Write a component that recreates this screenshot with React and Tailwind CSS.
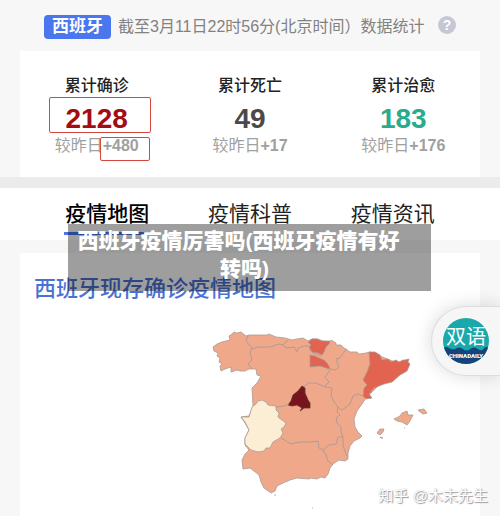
import React, { useState } from "react";

const stats = [
	{ label: "累计确诊", value: "2128", delta: "+480", color: "text-[#a30d12]", marked: true },
	{ label: "累计死亡", value: "49", delta: "+17", color: "text-[#4a4a4a]" },
	{ label: "累计治愈", value: "183", delta: "+176", color: "text-[#28ac8c]" },
];

const tabs = ["疫情地图", "疫情科普", "疫情资讯"];

function Header() {
	return (
		<header className="flex items-center px-11 pt-[15px] pb-3">
			<span className="rounded bg-[#4b77ee] px-2 text-[17px] leading-6 font-bold text-white whitespace-nowrap">西班牙</span>
			<span className="ml-[7px] text-[16px] leading-6 text-[#828282] whitespace-nowrap">
				截至3月11日22时56分(北京时间）数据统计
			</span>
			<button
				type="button"
				aria-label="帮助"
				className="mb-1 ml-auto flex h-[18px] w-[18px] shrink-0 items-center justify-center rounded-full bg-[#c5c7d6] text-[14px] leading-none font-bold text-white"
			>
				?
			</button>
		</header>
	);
}

function Stat({ label, value, delta, color, marked }) {
	return (
		<div className="flex flex-col items-center">
			<div className="text-[16px] leading-6 font-medium text-[#222]">{label}</div>
			<div className={`relative mt-[7px] text-[28px] leading-7 font-bold ${color}`}>
				{value}
				{marked && <span className="absolute -top-2 -left-[17px] h-9 w-[102px] rounded-xs border-[1.5px] border-[#d4483f]" />}
			</div>
			<div className="relative mt-px text-[16px] leading-6 text-[#a0a0a0] whitespace-nowrap">
				较昨日<span className="font-bold">{delta}</span>
				{marked && <span className="absolute top-[3px] -right-[11px] h-6 w-[50px] rounded-xs border-[1.5px] border-[#d4483f]" />}
			</div>
		</div>
	);
}

function SpainMap() {
	return (
		<svg viewBox="200 320 240 196" className="ml-[180px] h-[196px] w-60" role="img" aria-label="西班牙" strokeLinejoin="round">
			<g fill="#f0a88b" stroke="#a99a93" strokeWidth="0.8">
				<path
					d="M213 347L217 344L222 342L226 341L230 340L229 336L232 334L234 332L237 333L241 332L246 336L249 335
					L258 335L267 335L269 334L276 337L285 338L292 340L297 339L303 338L308 341L312 339L318 339L323 341L330 342L331 340
					L336 343L336 345L341 345L344 348L346 349L350 352L357 352L359 354L366 353L370 352L400 364
					L366 398L362 404L357 411L354 419L355 427L358 432L362 436L360 438L354 441L350 446L348 453L348 459L345 461L339 460
					L333 464L330 468L328 474L325 478L321 477L317 479L311 478L309 479L297 478L290 480L283 483L277 486L275 491L271 493
					L264 488L261 482L259 475L254 471L250 468L243 469L242 460L245 454L249 450L245 445L245 438L249 430L245 423L241 417
					L249 416L253 406L252 388L257 383L261 376L257 375L256 369L249 369L245 371L240 371L237 370L231 372L231 367L225 369
					L221 371L220 366L222 364L219 362L220 358L217 356L218 353L214 351Z"
				/>
				<path d="M394 419L400 416L402 413L407 411L408 415L413 415L410 421L407 425L402 422L397 421Z" />
				<path d="M418 410L424 409L427 413L423 414L419 411Z" />
				<path d="M377 433L380 429L384 429L383 432L380 435Z" />
				<path d="M380 437L383 438L381 438ZM404 428L405 428M274 495L276 495M312 508L313 508" />
			</g>
			<path
				d="M241 417L249 417L252 407L256 404L258 401L262 400L266 402L268 405L276 406L276 410L279 413L278 417L282 420L286 423
				L284 427L281 429L283 433L280 438L273 442L270 448L266 448L264 451L258 452L251 450L245 444L245 438L249 430L245 422Z"
				fill="#fbeed4"
				stroke="#a99a93"
				strokeWidth="0.8"
			/>
			<g fill="#e26350" stroke="#a99a93" strokeWidth="0.8">
				<path d="M308 342L312 339L317 339L321 341L330 341L329 344L326 347L324 352L322 355L318 353L312 352L309 347L311 345Z" />
				<path d="M310 355L315 356L319 358L324 360L327 363L329 366L330 369L326 368L320 366L310 367Z" />
				<path
					d="M369 352L375 352L380 355L382 360L388 359L391 362L396 360L399 362L403 360L405 360L409 359L408 362L410 364L407 371
					L400 375L392 382L384 384L374 388L369 394L372 398L366 399L363 396L364 388L367 385L363 380L367 372L370 364Z"
				/>
			</g>
			<path
				d="M302 386L305 388L305 393L308 400L310 403L310 408L304 408L300 411L302 408L297 405L292 406L288 405L291 401L293 395L298 391Z"
				fill="#77141e"
				stroke="#5e3534"
				strokeWidth="0.8"
			/>
			<g fill="none" stroke="#a99a93" strokeWidth="0.9">
				<path d="M248 336L246 341L252 348L250 353L252 360L248 364L252 369" />
				<path d="M252 349L258 347L270 347L279 344L283 345L286 348L294 347L297 352L298 348L304 346L309 346M283 345L288 340" />
				<path d="M309 349L313 353L321 356M346 349L340 358L336 359L339 367L335 370L330 369M330 370L325 377L329 382L325 386" />
				<path d="M304 386L309 383L316 383L325 387L332 388L331 396L334 402L338 407L341 410L345 408L350 404L353 396L358 394L363 396" />
				<path d="M276 407L284 406L289 404M338 407L337 412L340 415L336 418L337 423L341 427L341 432L343 437" />
				<path d="M343 437L338 437L336 444L329 445L323 450L319 448L318 441L312 442L300 442L291 444L281 438" />
				<path d="M343 437L343 446L347 456M323 450L326 455L328 461L333 465" />
			</g>
		</svg>
	);
}

function Bilingual() {
	return (
		<button
			type="button"
			aria-label="双语"
			className="absolute top-[306px] right-0 flex h-[70px] w-[69px] items-center rounded-l-full border border-r-0 border-[#ddd] bg-[#f6f6f6] pl-[11px] shadow-[0_0_18px_rgba(0,0,0,0.15)]"
		>
			<svg viewBox="0 0 46 46" className="h-[46px] w-[46px] shrink-0">
				<clipPath id="disc"><circle cx="23" cy="23" r="23" /></clipPath>
				<g clipPath="url(#disc)">
					<path d="M0 0h46v46H0z" fill="#1aa9ab" />
					<path d="M0 30q3-2 6 0t6 1q4-3 8 0t7 0q4-3 8 0t6-1q3-2 5 0v16H0z" fill="#14447c" />
				</g>
				<text x="23" y="26" textAnchor="middle" fontSize="20" fill="#fff" className="font-['Noto_Sans_CJK_SC',sans-serif]">双语</text>
				<text x="23" y="40" textAnchor="middle" fontSize="6" fontWeight="900" fill="#fff" className="font-['Roboto',sans-serif]">CHINADAILY</text>
			</svg>
		</button>
	);
}

function App() {
	const [active, setActive] = useState(0);

	return (
		<div className="relative min-h-screen overflow-hidden bg-[#f7f7f7] font-['Liberation_Sans','Noto_Sans_CJK_SC',sans-serif]">
			<Header />
			<section className="mx-5 grid grid-cols-3 bg-white pt-[23px] pb-[19px]">
				{stats.map((stat) => (
					<Stat key={stat.label} {...stat} />
				))}
			</section>

			<nav className="grid grid-cols-3 border-t-[11px] border-[#ebebeb] bg-white px-9 pt-3 pb-[5px]">
				{tabs.map((tab, index) => (
					<button
						key={tab}
						type="button"
						onClick={() => setActive(index)}
						className={`mx-auto border-b-[3px] px-px pb-1 text-[21px] leading-7 whitespace-nowrap ${index === active ? "border-[#4b77ee] font-medium text-black" : "border-transparent text-[#222]"}`}
					>
						{tab}
					</button>
				))}
			</nav>

			<section className="mx-5 mt-[13px] bg-white pt-5">
				<h2 className="pl-[14px] text-[22px] leading-8 font-medium text-[#4a72d4]">西班牙现存确诊疫情地图</h2>
				<div className="mt-[15px]">
					<SpainMap />
				</div>
			</section>

			<Bilingual />

			<h1 className="absolute top-56 right-[69px] left-[68px] bg-black/38 pt-[3px] pr-[22px] pb-2 text-center text-[21px] leading-7 font-black text-white">
				西班牙疫情厉害吗(西班牙疫情有好
				<span className="block pl-3">转吗)</span>
			</h1>

			<div className="absolute right-3 bottom-2 text-[15px] leading-6 text-white [text-shadow:1px_1px_1px_#999,0_0_1px_#aaa]">知乎 @木末先生</div>
		</div>
	);
}

export default App;
